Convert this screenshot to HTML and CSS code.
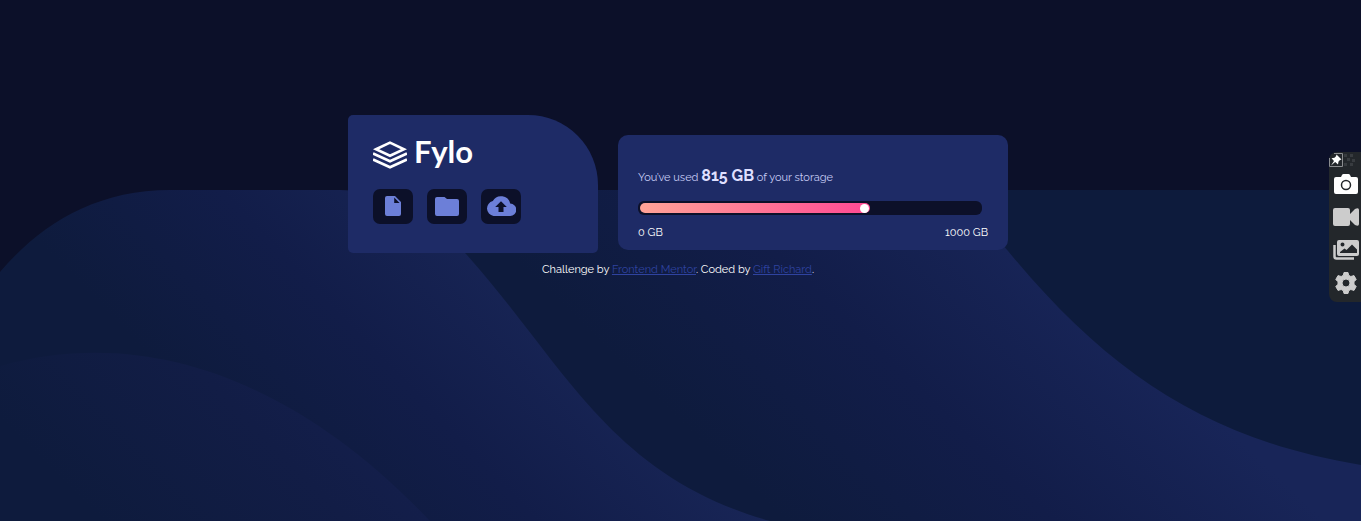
FILE: index.html
```html
<!DOCTYPE html>
<html lang="en">
<head>
<meta charset="utf-8">
<meta name="viewport" content="width=device-width, initial-scale=1">
<title>Fylo data storage</title>
<link rel="stylesheet" href="styles.css">
</head>
<body>
<svg class="backdrop" viewBox="0 0 1361 331" preserveAspectRatio="none" aria-hidden="true">
  <defs>
    <linearGradient id="left" gradientUnits="userSpaceOnUse" x1="190" y1="210" x2="430" y2="-20">
      <stop offset="0" stop-color="#0e1b3d"/><stop offset=".5" stop-color="#121d49"/><stop offset="1" stop-color="#182556"/>
    </linearGradient>
    <linearGradient id="middle" gradientUnits="userSpaceOnUse" x1="700" y1="250" x2="960" y2="-20">
      <stop offset="0" stop-color="#0e1b3d"/><stop offset=".5" stop-color="#121d49"/><stop offset="1" stop-color="#182558"/>
    </linearGradient>
    <linearGradient id="hill" gradientUnits="userSpaceOnUse" x1="70" y1="300" x2="260" y2="110">
      <stop offset="0" stop-color="#0e1b3d"/><stop offset=".65" stop-color="#121d46"/><stop offset="1" stop-color="#141f4d"/>
    </linearGradient>
  </defs>
  <path fill="#0d1b3c" d="M800 0H1361V331H800Z"/>
  <path fill="url(#middle)" d="M400 0H940C970 15 990 40 1008 61C1110 185 1210 250 1361 275V331H400Z"/>
  <path fill="url(#left)" d="M0 82C40 35 95 0 170 0H340C400 0 436 33 466 64C566 176 610 286 770 331H0Z"/>
  <path fill="url(#hill)" d="M0 176C150 134 300 194 430 331H0Z"/>
</svg>

<main class="page">
  <div class="cards">
    <section class="card card-brand">
      <h1 class="logo">
        <svg class="logo-mark" viewBox="0 0 34 28" aria-hidden="true">
          <path fill="none" stroke="#fff" stroke-width="2.6" d="M3 8.2 17 1.6 31 8.2 17 14.8Z"/>
          <path fill="none" stroke="#fff" stroke-width="2.8" d="M0 12.4 17 20.2 34 12.4M0 18.4 17 26.2 34 18.4"/>
        </svg>
        <span>Fylo</span>
      </h1>
      <div class="actions">
        <button class="action" type="button" aria-label="Document">
          <svg width="16" height="20" viewBox="0 0 16 20"><path fill="#6c7fd8" d="M2 0H10L16 6V18Q16 20 14 20H2Q0 20 0 18V2Q0 0 2 0ZM9.2 1.5V7H14.6Z"/></svg>
        </button>
        <button class="action" type="button" aria-label="Folder">
          <svg width="24" height="19" viewBox="0 0 24 19"><path fill="#6c7fd8" d="M2 0H9.5L12 2H22Q24 2 24 4V17Q24 19 22 19H2Q0 19 0 17V2Q0 0 2 0Z"/></svg>
        </button>
        <button class="action" type="button" aria-label="Upload">
          <svg width="30" height="20" viewBox="0 0 30 20"><path fill="#6c7fd8" fill-rule="evenodd" d="M24.2 7.6A9.4 9.4 0 0 0 6.8 5.1 7.6 7.6 0 0 0 7.5 20H24A6.2 6.2 0 0 0 24.2 7.6ZM17.5 11V16H12.5V11H9.2L15 5.2 20.8 11Z"/></svg>
        </button>
      </div>
    </section>

    <section class="card card-usage">
      <p class="usage">You’ve used <strong>815 GB</strong> of your storage</p>
      <div class="meter" role="meter" aria-label="Storage used" aria-valuemin="0" aria-valuemax="1000" aria-valuenow="815">
        <div class="meter-fill" style="width:67.6%"><span class="meter-dot"></span></div>
      </div>
      <div class="scale"><span>0 GB</span><span>1000 GB</span></div>
    </section>
  </div>
  <footer class="credit">Challenge by <a href="#mentor">Frontend Mentor</a>. Coded by <a href="#author">Gift Richard</a>.</footer>
</main>

<aside class="capture" aria-label="Capture tools">
  <button class="pin" type="button" aria-label="Pin">
    <svg width="14" height="14" viewBox="0 0 14 14"><path fill="none" stroke="#8b8d90" d="M5 .5H13.5V13.5H.5V5"/><path fill="#fff" d="M7.5 1.5 12.5 6.5 11 7 9.5 8.5 9 11.5 6.2 9 2 12.5 5 8 2.5 5.2 5.5 4.8 7 3.2Z"/></svg>
    <svg width="14" height="14" viewBox="0 0 14 14"><path fill="#383c40" d="M1 1h3v3H1zM7 1h3v3H7zM4 5h3v3H4zM9 6h3v3H9zM1 10h3v3H1zM7 10h3v3H7z"/></svg>
  </button>
  <button class="tool" type="button" aria-label="Take photo">
    <svg width="24" height="20" viewBox="0 0 24 20"><path fill="#fff" d="M2 3H7L8 1Q8.5 0 9.5 0H14.500Q15.500 0 16 1L17 3H22Q24 3 24 5V18Q24 20 22 20H2Q0 20 0 18V5Q0 3 2 3Z"/><circle cx="12" cy="11" r="4.500" fill="#fff" stroke="#23272b" stroke-width="1.500"/></svg>
  </button>
  <button class="tool" type="button" aria-label="Record video">
    <svg width="26" height="18" viewBox="0 0 26 18"><path fill="#ccc" d="M2 0H15Q17 0 17 2V6L22 1Q26 -1 26 2V16Q26 19 22 17L17 12V16Q17 18 15 18H2Q0 18 0 16V2Q0 0 2 0Z"/></svg>
  </button>
  <button class="tool" type="button" aria-label="Gallery">
    <svg width="26" height="20" viewBox="0 0 26 20"><path fill="none" stroke="#ccc" stroke-width="2.500" d="M1.500 5V16.500Q1.500 18.500 3.500 18.500H21"/><path fill="#ccc" fill-rule="evenodd" d="M6 0H24Q26 0 26 2V14Q26 16 24 16H6Q4 16 4 14V2Q4 0 6 0ZM9.500 2.500A2 2 0 1 0 9.500 6.500 2 2 0 0 0 9.500 2.500ZM7 13H24V9.500L19 4.500 13.500 10 11.500 8.500 7 12Z"/></svg>
  </button>
  <button class="tool" type="button" aria-label="Settings">
    <svg width="22" height="22" viewBox="0 0 22 22"><path fill="#ccc" stroke="#ccc" stroke-linejoin="round" fill-rule="evenodd" d="M9 .5H13L13.700 3.300 15.800 4.500 19 3.600 21.200 7.500 19 9.800V12.200L21.200 14.500 19 18.400 15.800 17.500 13.700 18.700 13 21.500H9L8.300 18.700 6.200 17.500 3 18.400 .8 14.500 3 12.200V9.800L.8 7.500 3 3.600 6.200 4.500 8.300 3.300ZM11 7A4 4 0 1 0 11 15 4 4 0 0 0 11 7Z"/></svg>
  </button>
</aside>
</body>
</html>
```
FILE: styles.css
```css
* {
  box-sizing: border-box;
}

body {
  margin: 0;
  min-height: 100vh;
  background: #0c1029;
  color: #fff;
  font-family: Raleway, Lato, "Open Sans", sans-serif;
  font-size: 11px;
  font-variant-numeric: oldstyle-nums;
  line-height: 16px;
}

.backdrop {
  position: absolute;
  z-index: -1;
  left: 0;
  bottom: 0;
  width: 100%;
  height: calc(100vh - 190px);
}

.page {
  display: flex;
  flex-direction: column;
  align-items: center;
  gap: 9px;
  padding: 115px 5px 0 0;
}

.cards {
  display: flex;
  flex-wrap: wrap;
  justify-content: center;
  align-items: flex-end;
  gap: 20px;
}

.card {
  background: #1e2b66;
}

.card-brand {
  width: 250px;
  padding: 18px 25px 29px;
  border-radius: 5px 70px 5px 5px;
}

.logo {
  display: flex;
  align-items: center;
  gap: 7px;
  margin: 0 0 20px;
  font-family: Lato, sans-serif;
  font-size: 31px;
  font-weight: 700;
  line-height: 36px;
}

.logo-mark {
  width: 34px;
  height: 28px;
  margin-top: 8px;
}

.actions {
  display: flex;
  gap: 14px;
}

button {
  display: flex;
  align-items: center;
  justify-content: center;
  padding: 0;
  border: 0;
  background: none;
  cursor: pointer;
}

.action {
  width: 40px;
  height: 35px;
  padding-bottom: 1px;
  border-radius: 7px;
  background: #0c1029;
}

.card-usage {
  width: 390px;
  margin-bottom: 3px;
  padding: 29px 20px 9px;
  border-radius: 10px;
}

.usage {
  margin: 0 0 11px;
  color: #c8cdf5;
  line-height: 24px;
}

.usage strong {
  color: #dfdfff;
  font-size: 16px;
}

.meter {
  width: 344px;
  max-width: 100%;
  padding: 2px;
  border-radius: 6px;
  background: #0c1029;
}

.meter-fill {
  display: flex;
  align-items: center;
  justify-content: flex-end;
  height: 10px;
  padding-right: 1px;
  border-radius: 5px;
  background: linear-gradient(90deg, #ffa397, #ff4993);
}

.meter-dot {
  width: 9px;
  height: 9px;
  border-radius: 50%;
  background: #fff;
}

.scale {
  display: flex;
  justify-content: space-between;
  margin-top: 10px;
}

.credit a {
  color: #2f43a0;
}

.capture {
  position: fixed;
  top: 152px;
  right: 0;
  display: flex;
  flex-direction: column;
  width: 32px;
  padding-bottom: 3px;
  border-radius: 8px 0 0 8px;
  background: #23272b;
}

.pin {
  justify-content: flex-start;
  height: 15px;
}

.tool {
  height: 33px;
  padding-left: 1px;
}
```
